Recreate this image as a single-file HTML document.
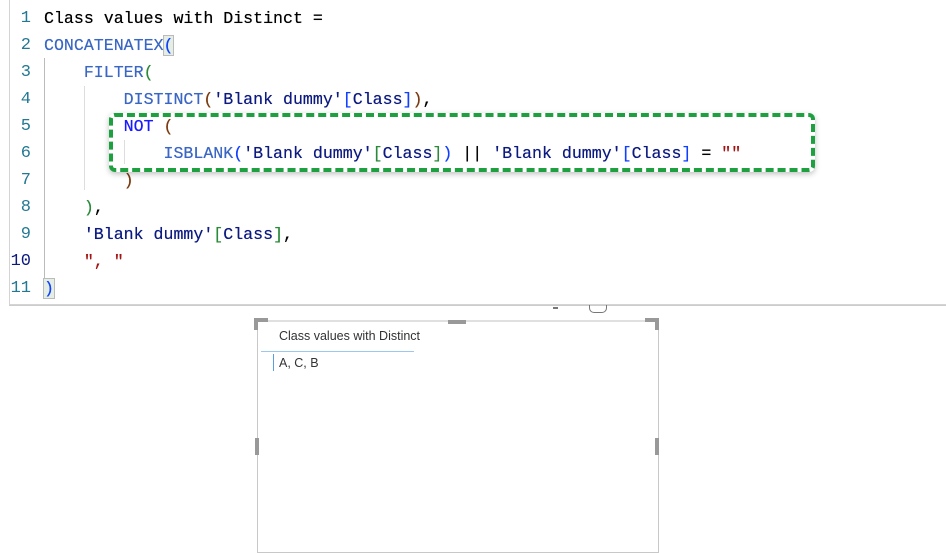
<!DOCTYPE html>
<html><head><meta charset="utf-8"><style>
body{margin:0;width:946px;height:542px;background:#fff;position:relative;overflow:hidden;font-family:"Liberation Sans",sans-serif}
.ed{position:absolute;left:9px;top:-1px;width:940px;height:305px;border:1px solid #d4d4d4;border-top:none;}
.ln{position:absolute;width:31px;left:0;text-align:right;font:17px "Liberation Mono",monospace;color:#237893;}
.cd{position:absolute;left:44px;font:16.6px "Liberation Mono",monospace;white-space:pre;color:#000;line-height:27px;text-shadow:0 0 0.4px currentColor}
.k{color:#3a66c4}.t{color:#0c1a80}.b{color:#1040ff}.s{color:#a31515}.p{color:#7a3a10}.g{color:#2a8a3a}
.guide{position:absolute;width:1px;background:#ddd}
</style></head><body>
<div class="ed"></div>
<div class="guide" style="left:44px;top:58px;height:230px;background:#bbb"></div>
<div class="guide" style="left:84px;top:86px;height:104px"></div>
<div class="guide" style="left:124px;top:140px;height:24px"></div>
<div id="lines"></div>
<div style="position:absolute;left:109px;top:113px;width:698px;height:51px;border:4px dashed #1fa040;border-radius:6px;box-shadow:0 2px 6px rgba(0,0,0,.25)"></div>
<div style="position:absolute;left:9px;top:305px;width:937px;height:1px;background:#ccc"></div>
<!-- visual -->
<div style="position:absolute;left:257px;top:320px;width:400px;height:230px;border:1px solid #c8c8c8;border-top:2px solid #e0e0e0"></div>
<div style="position:absolute;left:254px;top:318px;width:14px;height:4px;background:#999"></div>
<div style="position:absolute;left:254px;top:318px;width:4px;height:12px;background:#999"></div>
<div style="position:absolute;left:645px;top:318px;width:14px;height:4px;background:#999"></div>
<div style="position:absolute;left:655px;top:318px;width:4px;height:12px;background:#999"></div>
<div style="position:absolute;left:448px;top:320px;width:18px;height:4px;background:#999"></div>
<div style="position:absolute;left:255px;top:438px;width:4px;height:17px;background:#999"></div>
<div style="position:absolute;left:655px;top:438px;width:4px;height:17px;background:#999"></div>
<div style="position:absolute;left:553px;top:307px;width:5px;height:2px;background:#777"></div>
<div style="position:absolute;left:589px;top:305px;width:16px;height:7px;border:1px solid #777;border-top:none;border-radius:0 0 5px 5px"></div>
<div style="position:absolute;left:279px;top:329px;font-size:12.5px;color:#333">Class values with Distinct</div>
<div style="position:absolute;left:261px;top:351px;width:153px;height:1px;background:#9cc8ee"></div>
<div style="position:absolute;left:273px;top:354px;width:1px;height:17px;background:#5a9ee0"></div>
<div style="position:absolute;left:279px;top:356px;font-size:12.5px;color:#333">A, C, B</div>
<script>
var L=[
'Class values with Distinct =',
'<span class="k">CONCATENATEX</span><span class="b" style="background:#e4eee4;outline:1px solid #bbb">(</span>',
'    <span class="k">FILTER</span><span class="g">(</span>',
'        <span class="k">DISTINCT</span><span class="p">(</span><span class="t">\'Blank dummy\'</span><span class="b">[</span><span class="t">Class</span><span class="b">]</span><span class="p">)</span>,',
'        <span class="b" style="color:#1a1aff">NOT</span> <span class="p">(</span>',
'            <span class="k">ISBLANK</span><span class="b">(</span><span class="t">\'Blank dummy\'</span><span class="g">[</span><span class="t">Class</span><span class="g">]</span><span class="b">)</span> || <span class="t">\'Blank dummy\'</span><span class="b">[</span><span class="t">Class</span><span class="b">]</span> = <span class="s">""</span>',
'        <span class="p">)</span>',
'    <span class="g">)</span>,',
'    <span class="t">\'Blank dummy\'</span><span class="g">[</span><span class="t">Class</span><span class="g">]</span>,',
'    <span class="s">", "</span>',
'<span class="b" style="background:#e4eee4;outline:1px solid #bbb">)</span>'];
var h='';for(var i=0;i<L.length;i++){var y=5+i*27;
h+='<div class="ln" style="top:'+(y+4)+'px;color:'+(i==9?'#0c1a80':'#237893')+'">'+(i+1)+'</div>';
h+='<div class="cd" style="top:'+y+'px">'+L[i]+'</div>';}
document.getElementById('lines').innerHTML=h;
</script>
</body></html>
